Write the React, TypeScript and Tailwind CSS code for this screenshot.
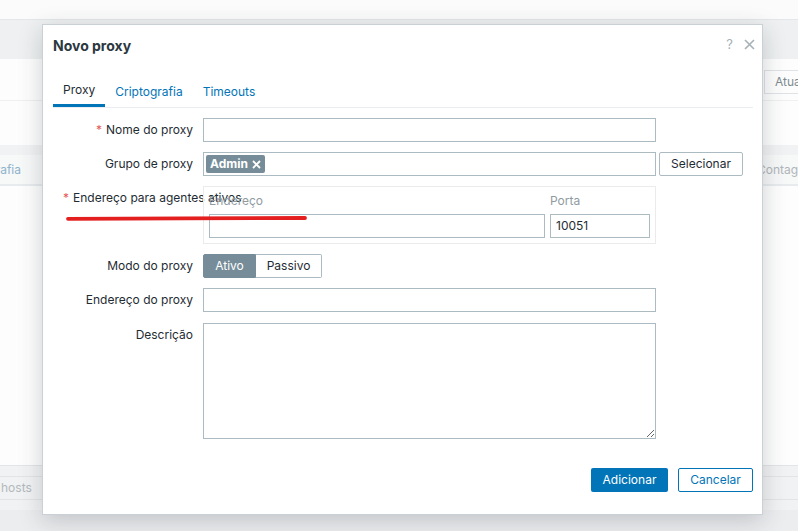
import React from "react";

const font = { fontFamily: "Inter, 'Liberation Sans', sans-serif" };

function Label({ text, req }: { text: string; req?: boolean }) {
  return (
    <div className="w-[130px] shrink-0 h-[24px] leading-[24px] text-right whitespace-nowrap text-[12px] text-[#1f2c33]">
      {req && <span className="text-[#e45959] mr-[4px]">*</span>}
      {text}
    </div>
  );
}

function Input({ w = "w-[453px]", value = "" }: { w?: string; value?: string }) {
  return (
    <div className={`${w} shrink-0 h-[24px] border border-[#acbbc2] bg-white px-[5px] leading-[22px] text-[12px] text-[#1f2c33]`}>
      {value}
    </div>
  );
}

export default function App() {
  return (
    <div className="relative w-[798px] h-[531px] overflow-hidden bg-[#ebedef]" style={font}>
      {/* background page */}
      <div className="flex flex-col h-full">
        <div className="h-[19px] bg-[#fbfbfb]" />
        <div className="h-[40px] bg-[#eef0f1] border-t border-[#e4e7e9]" />
        <div className="h-[406px] bg-[#fdfdfd] flex flex-col">
          <div className="h-[86px] flex flex-col">
            <div className="h-[11px]" />
            <div className="flex">
              <div className="w-[764px] shrink-0" />
              <div className="h-[24px] w-[80px] shrink-0 border border-[#dfe3e6] pl-[10px] leading-[22px] text-[12px] text-[#7f8b91] whitespace-nowrap">Atualizar</div>
            </div>
            <div className="h-[7px] border-b border-[#eef0f1]" />
          </div>
          <div className="h-[10px] bg-[#f1f2f3]" />
          <div className="h-[31px] bg-[#f7f8f8] border-b-2 border-[#e8ebed] flex items-center text-[12px]">
            <div className="w-[21px] shrink-0 flex justify-end whitespace-nowrap text-[#8fb4cc]">Criptografia</div>
            <div className="w-[736px] shrink-0" />
            <div className="shrink-0 whitespace-nowrap text-[#b0b6ba]">Contagem</div>
          </div>
          <div className="flex-1" />
        </div>
        <div className="h-[45px] bg-[#f1f2f3] border-t border-[#e2e5e7] flex flex-col">
          <div className="h-[10px]" />
          <div className="h-[24px] border-y border-[#e2e5e7] leading-[22px] text-[12px] text-[#b3b9bd] pl-[1px]">hosts</div>
        </div>
        <div className="flex-1 bg-[#ecedef]" />
      </div>

      {/* modal */}
      <div className="absolute left-[42px] top-[24px] w-[721px] h-[491px] bg-white border border-[#c9d1d5] shadow-[0_6px_22px_rgba(40,50,60,0.22)] flex flex-col pl-[10px] pr-[9px]">
        <div className="flex items-start pt-[12px]">
          <div className="text-[14px] leading-[18px] font-bold text-[#2b3840]">Novo proxy</div>
          <div className="ml-auto flex items-center gap-[11px] -mr-[2px] -mt-[2px] text-[#a6b1b7]">
            <span className="text-[13px]">?</span>
            <svg width="11" height="11" viewBox="0 0 11 11">
              <path d="M1 1L10 10M10 1L1 10" stroke="#a6b1b7" strokeWidth="1.6" />
            </svg>
          </div>
        </div>
        <div className="mt-[21px] flex border-b border-[#ebeef0] text-[12px]">
          <div className="h-[31px] px-[10px] flex items-center border-b-[3px] border-[#0275b8] -mb-px text-[#1f2c33]">Proxy</div>
          <div className="h-[31px] px-[10px] flex items-center text-[#0275b8]">Criptografia</div>
          <div className="h-[31px] px-[10px] flex items-center text-[#0275b8]">Timeouts</div>
        </div>

        <div className="pl-[10px] pt-[10px] flex flex-col gap-[10px]">
          <div className="flex gap-[10px]">
            <Label text="Nome do proxy" req />
            <Input />
          </div>
          <div className="flex gap-[10px]">
            <Label text="Grupo de proxy" />
            <div className="flex gap-[3px]">
              <div className="w-[453px] h-[24px] border border-[#acbbc2] bg-white flex items-center pl-[2px]">
                <div className="h-[18px] px-[4px] rounded-[2px] bg-[#768d99] text-white text-[12px] font-bold flex items-center gap-[4px]">
                  Admin
                  <svg width="9" height="9" viewBox="0 0 9 9">
                    <path d="M1 1L8 8M8 1L1 8" stroke="white" strokeWidth="1.8" />
                  </svg>
                </div>
              </div>
              <div className="w-[84px] h-[24px] border border-[#acbbc2] rounded-[2px] flex items-center justify-center text-[12px] text-[#1f2c33]">Selecionar</div>
            </div>
          </div>
          <div className="flex gap-[10px]">
            <Label text="Endereço para agentes ativos" req />
            <div className="w-[453px] border border-[#ebebeb] px-[5px] pt-[5px] pb-[5px] flex gap-[5px]">
              <div className="flex flex-col gap-[4px]">
                <div className="h-[18px] leading-[18px] text-[12px] text-[#8f9ba1]">Endereço</div>
                <Input w="w-[336px]" />
              </div>
              <div className="flex flex-col gap-[4px]">
                <div className="h-[18px] leading-[18px] text-[12px] text-[#8f9ba1]">Porta</div>
                <Input w="w-[100px]" value="10051" />
              </div>
            </div>
          </div>
          <div className="flex gap-[10px]">
            <Label text="Modo do proxy" />
            <div className="flex h-[24px] text-[12px]">
              <div className="w-[53px] bg-[#768d99] border border-[#768d99] rounded-l-[2px] text-white flex items-center justify-center">Ativo</div>
              <div className="w-[66px] border border-l-0 border-[#acbbc2] rounded-r-[2px] text-[#1f2c33] flex items-center justify-center">Passivo</div>
            </div>
          </div>
          <div className="flex gap-[10px]">
            <Label text="Endereço do proxy" />
            <Input />
          </div>
          <div className="flex gap-[10px] mt-[1px]">
            <Label text="Descrição" />
            <textarea className="w-[453px] h-[116px] border border-[#acbbc2] bg-white outline-none" readOnly />
          </div>
        </div>

        <div className="mt-auto mb-[22px] flex justify-end gap-[10px] text-[12px]">
          <div className="w-[77px] h-[24px] rounded-[2px] bg-[#0275b8] text-white flex items-center justify-center">Adicionar</div>
          <div className="w-[75px] h-[24px] rounded-[2px] border border-[#0275b8] text-[#0275b8] flex items-center justify-center">Cancelar</div>
        </div>
      </div>

      {/* red annotation */}
      <svg className="absolute left-[62px] top-[210px]" width="250" height="16" viewBox="0 0 250 16">
        <path d="M6 8.8 C 80 8.6, 170 8.2, 243 8" stroke="#e41f1f" strokeWidth="3.8" strokeLinecap="round" fill="none" />
      </svg>
    </div>
  );
}
